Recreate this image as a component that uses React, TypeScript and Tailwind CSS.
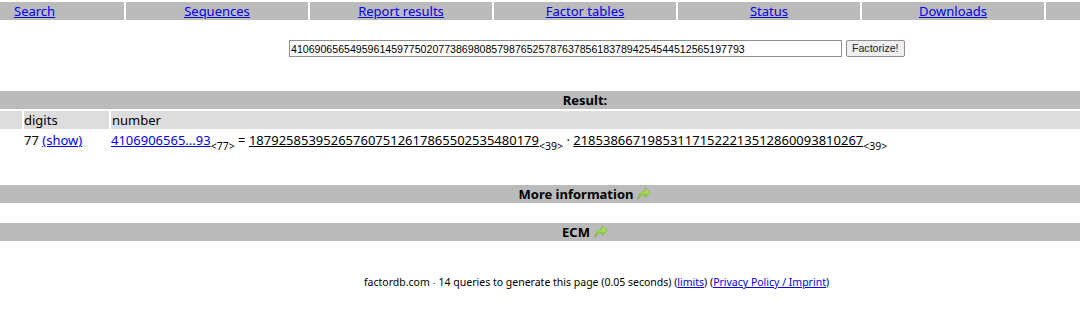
import React from "react";

const NAV = [
  { label: "Search", w: "w-[124px]", align: "text-left pl-[14px]" },
  { label: "Sequences", w: "w-[182px]", align: "text-center" },
  { label: "Report results", w: "w-[182px]", align: "text-center" },
  { label: "Factor tables", w: "w-[182px]", align: "text-center" },
  { label: "Status", w: "w-[182px]", align: "text-center" },
  { label: "Downloads", w: "w-[182px]", align: "text-center" },
  { label: "", w: "w-[124px]", align: "text-center" },
];

function Arrow() {
  return (
    <svg width="14" height="13" viewBox="0 0 13 12" className="inline-block ml-[4px] -mt-[4px] align-middle">
      <defs>
        <linearGradient id="g" x1="0" y1="0" x2="0" y2="1">
          <stop offset="0" stopColor="#c4ec6a" />
          <stop offset="1" stopColor="#7cc22a" />
        </linearGradient>
      </defs>
      <path d="M1 11.5 C1 6.5 4 4 7.5 4 L7.5 0.8 L12.5 5.2 L7.5 9.6 L7.5 6.8 C4.8 6.8 2.6 8.3 1 11.5 Z" fill="url(#g)" stroke="#6aa82a" strokeWidth="0.5" />
    </svg>
  );
}

const Sub = ({ n }: { n: number }) => (
  <sub className="text-[10.5px] align-[-2px] no-underline">&lt;{n}&gt;</sub>
);

export default function App() {
  return (
    <div className="w-[1080px] h-[329px] overflow-hidden bg-white text-[13px] text-black font-['Noto_Sans',sans-serif]">
      <div className="w-[1170px]">
        {/* nav */}
        <div className="flex gap-[2px] mt-[2px]">
          {NAV.map((n, i) => (
            <div key={i} className={`${n.w} h-[18px] leading-[18px] bg-[#bbbbbb] ${n.align}`}>
              {n.label && <a href="#" className="text-[#0000ee] underline">{n.label}</a>}
            </div>
          ))}
        </div>

        {/* form */}
        <div className="flex items-center mt-[20px] ml-[289px] gap-[4px]">
          <input
            readOnly
            value="41069065654959614597750207738698085798765257876378561837894254544512565197793"
            className="w-[553px] h-[17px] border border-[#8f8f8f] px-[1px] text-[10.6px] font-['Liberation_Sans',sans-serif] outline-none"
          />
          <button className="h-[17px] px-[5px] border border-[#8f8f8f] bg-[#efefef] rounded-[2px] text-[10.6px] leading-[15px] font-['Liberation_Sans',sans-serif] text-[#222]">
            Factorize!
          </button>
        </div>

        {/* result */}
        <div className="mt-[34px] h-[18px] leading-[18px] bg-[#bbbbbb] text-center font-bold">Result:</div>
        <div className="flex gap-[2px] mt-[2px]">
          <div className="w-[22px] h-[18px] bg-[#dddddd]" />
          <div className="w-[85px] h-[18px] leading-[18px] bg-[#dddddd]">digits</div>
          <div className="flex-1 h-[18px] leading-[18px] bg-[#dddddd] pl-[1px]">number</div>
        </div>
        <div className="flex gap-[2px] mt-[2px] h-[18px] leading-[18px]">
          <div className="w-[22px]" />
          <div className="w-[85px]">
            77 <a href="#" className="text-[#0000ee] underline">(show)</a>
          </div>
          <div className="flex-1 whitespace-nowrap">
            <a href="#" className="text-[#0000ee] underline">4106906565...93</a>
            <Sub n={77} /> = <span className="underline">187925853952657607512617865502535480179</span>
            <Sub n={39} /> · <span className="underline">218538667198531171522213512860093810267</span>
            <Sub n={39} />
          </div>
        </div>

        <div className="mt-[36px] h-[18px] leading-[18px] bg-[#bbbbbb] text-center font-bold">
          More information<Arrow />
        </div>
        <div className="mt-[20px] h-[18px] leading-[18px] bg-[#bbbbbb] text-center font-bold">
          ECM<Arrow />
        </div>

        <div className="mt-[33px] ml-[364px] text-[10.5px] leading-[16px] whitespace-nowrap">
          factordb.com <span className="text-[#888]">-</span> 14 queries to generate this page (0.05 seconds) (
          <a href="#" className="text-[#0000ee] underline">limits</a>) (
          <a href="#" className="text-[#0000ee] underline">Privacy Policy / Imprint</a>)
        </div>
      </div>
    </div>
  );
}
